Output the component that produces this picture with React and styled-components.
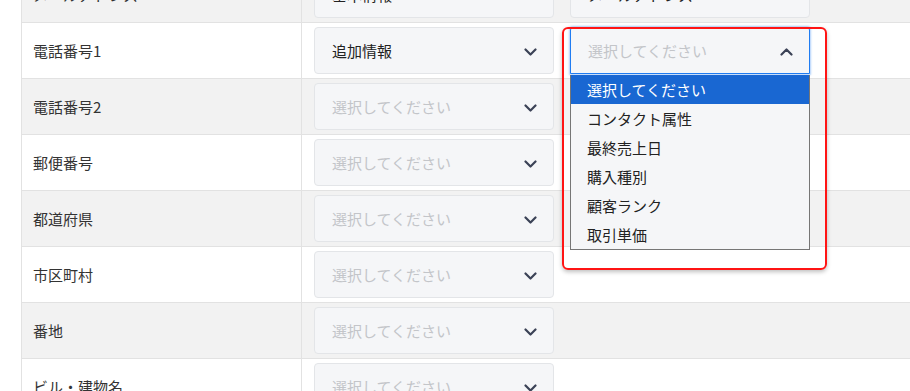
import React from "react";
import styled, { createGlobalStyle } from "styled-components";

const Global = createGlobalStyle`
  html, body { margin: 0; padding: 0; background: #fff; overflow: hidden; }
  body { font-family: "Noto Sans CJK JP", "Noto Sans", sans-serif; }
`;

const Page = styled.div`
  position: relative;
  width: 910px;
  height: 391px;
  overflow: hidden;
`;

const Table = styled.div`
  margin-top: -33px;
  margin-left: 21px;
  border-left: 1px solid #e2e2e2;
`;

const Row = styled.div`
  display: flex;
  height: 55px;
  border-bottom: 1px solid #e2e2e2;
  background: ${(p) => (p.$shaded ? "#f2f2f2" : "#ffffff")};
`;

const LabelCell = styled.div`
  width: 280px;
  flex: none;
  border-right: 1px solid #e2e2e2;
  display: flex;
  align-items: center;
  padding-left: 11px;
  box-sizing: border-box;
  font-size: 15px;
  color: #333;
`;

const FieldCell = styled.div`
  flex: 1;
  display: flex;
  align-items: center;
  gap: 16px;
  padding-left: 12px;
`;

const SelectWrap = styled.div`
  position: relative;
  width: 240px;
  height: 47px;
`;

const SelectBox = styled.div`
  box-sizing: border-box;
  width: 100%;
  height: 100%;
  display: flex;
  align-items: center;
  justify-content: space-between;
  padding: 0 16px 0 17px;
  background: #f5f6f8;
  border: 1px solid ${(p) => (p.$open ? "#1f7cf2" : "#e3e5e8")};
  border-radius: ${(p) => (p.$open ? "3px 3px 0 0" : "4px")};
  box-shadow: ${(p) => (p.$open ? "0 0 2px 1px rgba(31,124,242,0.35)" : "none")};
  font-size: 15px;
  color: ${(p) => (p.$placeholder ? "#c3c5c9" : "#222")};
`;

const Chevron = ({ up }) => (
  <svg width="13" height="8" viewBox="0 0 13 8" style={{ marginTop: 2 }}>
    <path
      d={up ? "M1.5 6.5 L6.5 1.5 L11.5 6.5" : "M1.5 1.5 L6.5 6.5 L11.5 1.5"}
      fill="none"
      stroke="#3b4256"
      strokeWidth="2.2"
      strokeLinecap="round"
      strokeLinejoin="round"
    />
  </svg>
);

const Dropdown = styled.ul`
  position: absolute;
  left: 0;
  top: 48px;
  width: 240px;
  box-sizing: border-box;
  margin: 0;
  padding: 0;
  list-style: none;
  background: #f5f6f8;
  border: 1px solid #767676;
  border-top: none;
  z-index: 2;
`;

const Option = styled.li`
  height: 29px;
  display: flex;
  align-items: center;
  padding-left: 16px;
  font-size: 15px;
  color: ${(p) => (p.$active ? "#fff" : "#222")};
  background: ${(p) => (p.$active ? "#1967d2" : "transparent")};
`;

const Highlight = styled.div`
  position: absolute;
  left: 562px;
  top: 27px;
  width: 265px;
  height: 243px;
  box-sizing: border-box;
  border: 2px solid #ff1414;
  border-radius: 6px;
  box-shadow: 0 2px 4px rgba(0, 0, 0, 0.25);
  pointer-events: none;
  z-index: 3;
`;

const PH = "選択してください";

const rows = [
  { label: "メールアドレス", a: "基本情報", b: "メールアドレス" },
  { label: "電話番号1", a: "追加情報", open: true },
  { label: "電話番号2" },
  { label: "郵便番号" },
  { label: "都道府県" },
  { label: "市区町村" },
  { label: "番地" },
  { label: "ビル・建物名" },
];

const options = ["選択してください", "コンタクト属性", "最終売上日", "購入種別", "顧客ランク", "取引単価"];

const Select = ({ value, open }) => (
  <SelectWrap>
    <SelectBox $placeholder={!value} $open={open}>
      <span>{value || PH}</span>
      <Chevron up={open} />
    </SelectBox>
    {open && (
      <Dropdown>
        {options.map((o, i) => (
          <Option key={o} $active={i === 0}>
            {o}
          </Option>
        ))}
      </Dropdown>
    )}
  </SelectWrap>
);

export default function App() {
  return (
    <Page>
      <Global />
      <Table>
        {rows.map((r, i) => (
          <Row key={r.label} $shaded={i % 2 === 0}>
            <LabelCell>{r.label}</LabelCell>
            <FieldCell>
              <Select value={r.a} />
              {r.b && <Select value={r.b} />}
              {r.open && <Select open />}
            </FieldCell>
          </Row>
        ))}
      </Table>
      <Highlight />
    </Page>
  );
}
